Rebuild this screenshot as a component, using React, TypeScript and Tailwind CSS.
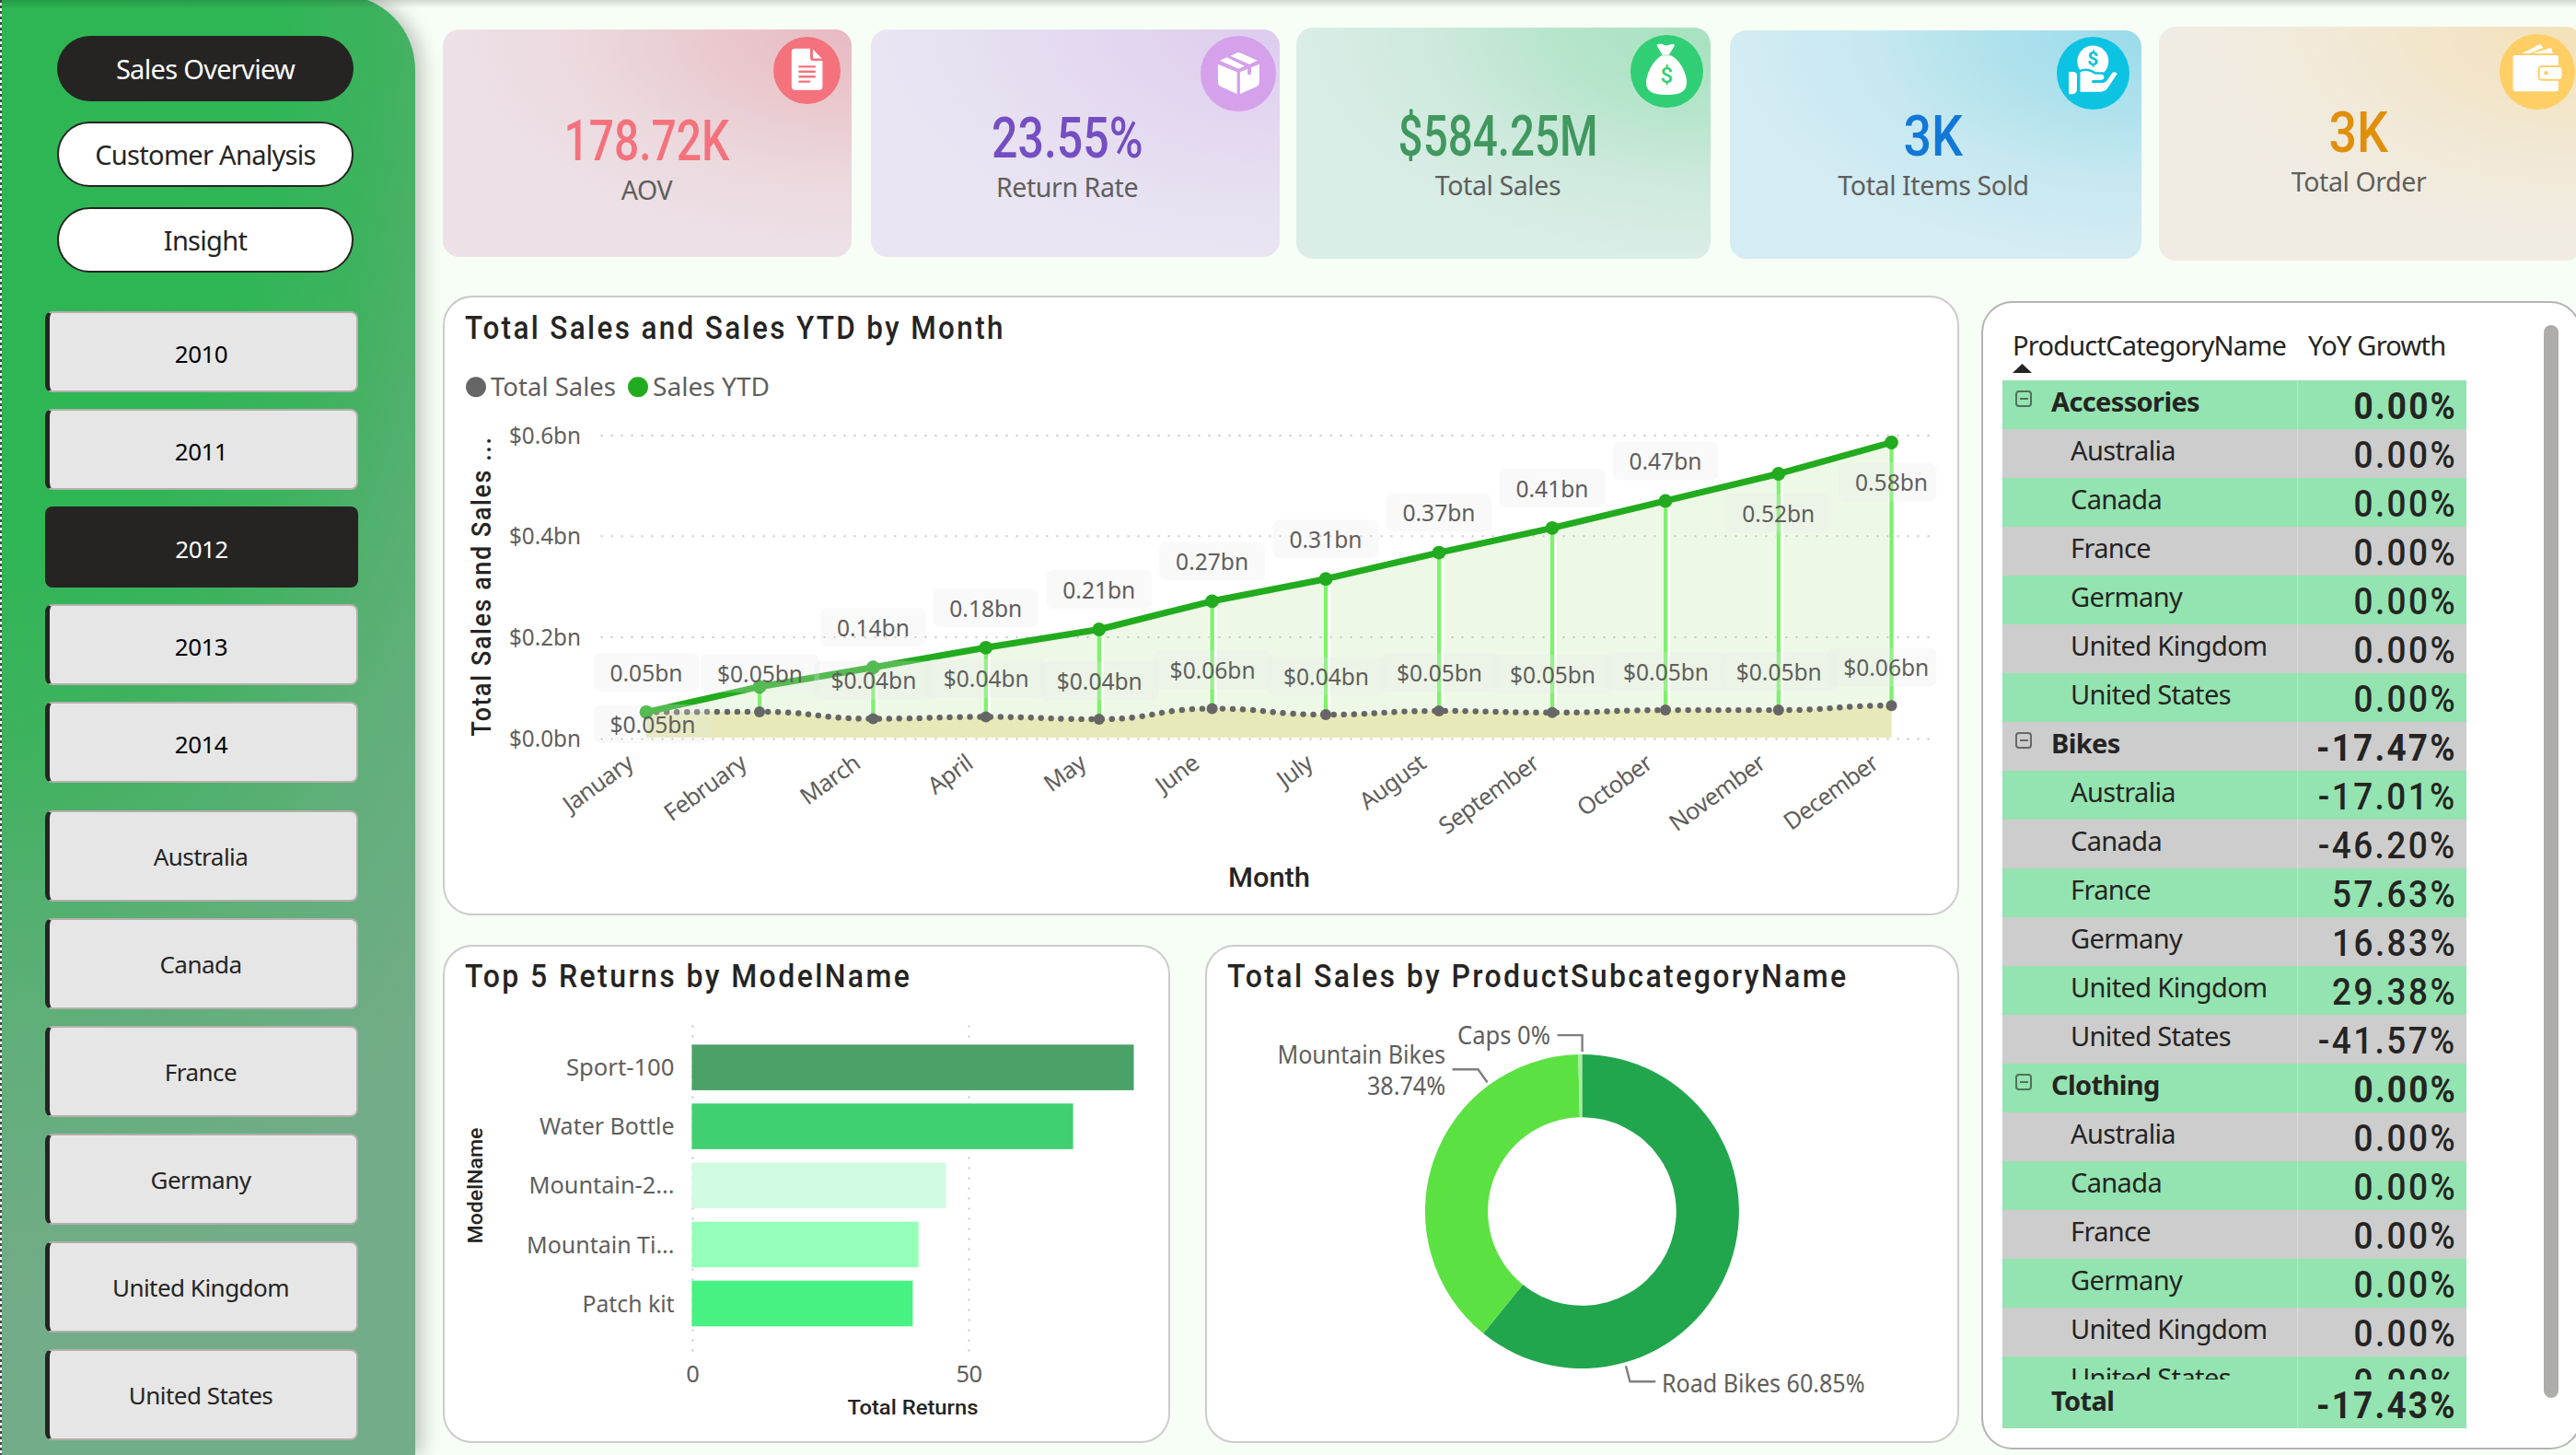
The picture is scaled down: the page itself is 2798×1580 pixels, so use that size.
import type { ReactNode } from "react";

type Kpi = {
  label: string;
  value: string;
  card: string;
  valueStyle: string;
  badge: string;
  icon: ReactNode;
};

const pages = ["Sales Overview", "Customer Analysis", "Insight"];
const years = ["2010", "2011", "2012", "2013", "2014"];
const countries = [
  "Australia",
  "Canada",
  "France",
  "Germany",
  "United Kingdom",
  "United States",
];

function FileIcon() {
  return (
    <svg viewBox="0 0 73 73" className="size-full">
      <path
        d="M23.5 12.7H40V23a3 3 0 0 0 3 3h10.4v28a3.7 3.7 0 0 1-3.7 3.7H23.5a3.7 3.7 0 0 1-3.7-3.7V16.4a3.7 3.7 0 0 1 3.7-3.7z"
        fill="#fff"
      />
      <path d="M43 13.6 52.6 23.4H43z" fill="#fff" />
      <path
        d="M28.4 32.4h16.4M28.4 37.8h16.4M28.4 43.2h16.4M28.4 48.6h10.8"
        stroke="#F3727C"
        strokeWidth="2.4"
        strokeLinecap="round"
      />
    </svg>
  );
}

function BoxIcon() {
  return (
    <svg viewBox="0 0 82 82" className="size-full" fill="#fff">
      <path d="M32.5 21.7 38.6 18.7Q41 17.4 44 18.7L61.8 26.7 53 30.7z" />
      <path d="M21 26.7 28.6 23.3 47.9 32.7 42.4 35.2Q41.2 35.7 40 35.2z" />
      <path d="M18.9 30.7 39.6 39.3V63L22 55Q18.9 53.4 18.9 50.3z" />
      <path d="M42.9 39.3 51 36V40.6a2 2 0 0 0 4 0V34.3L63.9 30.7V50.3Q63.9 53.4 61 55L42.9 63z" />
    </svg>
  );
}

function BagIcon() {
  return (
    <svg viewBox="0 0 79 79" className="size-full">
      <path
        d="M28.6 11.6Q28.6 9.4 31 9.8L34.3 9.7Q38.6 12.8 43.6 10.3 47.9 8.6 47.9 11.4L41.8 21.7H34.6z"
        fill="#fff"
      />
      <path
        d="M34 22.3H44C54 27 61 42 61 51 61 61 55 65 39.3 65 24 65 17 61 17 52 17 42 25 27 34 22.3z"
        fill="#fff"
      />
      <text
        x="39.3"
        y="51.6"
        textAnchor="middle"
        className="font-['Roboto',sans-serif] text-[24px] font-medium"
        fill="#31CF75"
      >
        $
      </text>
    </svg>
  );
}

function HandIcon() {
  return (
    <svg viewBox="0 0 79 79" className="size-full">
      <circle cx="39.3" cy="26.4" r="17" fill="#fff" />
      <g fill="#fff" stroke="#0DC3E2" strokeWidth="5" paintOrder="stroke">
        <path d="M25.5 59.7V38.3Q32.4 35.3 38.5 39L41.5 40.7H49.5Q52 42 51.3 45 50.5 46.7 47.6 47H39V50H49.5Q53 50 55 46.7L60.4 39Q63 37.3 65.8 40L55 56Q52.4 59.7 47.6 59.7z" />
      </g>
      <path
        d="M13 38H18.5Q22 38.5 22 42V58Q21 62 16.5 62.3H13z"
        fill="#fff"
      />
      <path
        d="M39.5 48.6H49.5"
        stroke="#0DC3E2"
        strokeWidth="3"
        strokeLinecap="round"
      />
      <text
        x="39.3"
        y="31.2"
        textAnchor="middle"
        className="font-['Roboto',sans-serif] text-[21px] font-bold"
        fill="#0DC3E2"
      >
        $
      </text>
    </svg>
  );
}

function WalletIcon() {
  return (
    <svg viewBox="0 0 82 82" className="size-full" fill="#fff">
      <path d="M24.4 21 42.8 11.4Q44.4 10.8 45.2 12.2L47.4 15 32.4 21z" />
      <path d="M36 21 54.6 15.2Q56 14.8 56.5 16.2L57.8 21z" />
      <rect x="14.5" y="23" width="49.5" height="39.2" rx="2.4" />
      <rect
        x="42.6"
        y="35"
        width="25.8"
        height="14.8"
        rx="3.6"
        stroke="#FFCE65"
        strokeWidth="2"
      />
      <circle cx="50.5" cy="42.3" r="2.2" fill="#FFCE65" />
    </svg>
  );
}

const kpis: Kpi[] = [
  {
    label: "AOV",
    value: "178.72K",
    card: "mt-[32px] w-[444px] h-[247px] pt-[91px] pr-[1px] bg-[radial-gradient(farthest-side_at_100%_0%,#E8B9C2_0%,#EACBD0_38%,#EBD9DE_66%,#EDE1E7_100%)]",
    valueStyle: "text-[#F3727C] scale-x-[0.785]",
    badge: "top-[8px] right-[12px] size-[73px] bg-[#F3727C]",
    icon: <FileIcon />,
  },
  {
    label: "Return Rate",
    value: "23.55%",
    card: "mt-[32px] ml-[21px] w-[444px] h-[247px] pt-[88px] pr-[18px] bg-[radial-gradient(farthest-side_at_100%_0%,#DDCCEE_0%,#E3D6F0_38%,#E6DEF0_66%,#E9E5F3_100%)]",
    valueStyle: "text-[#744EC2] scale-x-[0.82]",
    badge: "top-[7px] right-[4px] size-[82px] bg-[#D4A1EA]",
    icon: <BoxIcon />,
  },
  {
    label: "Total Sales",
    value: "$584.25M",
    card: "mt-[30px] ml-[18px] w-[450px] h-[251px] pt-[88px] pr-[12px] bg-[radial-gradient(farthest-side_at_100%_0%,#A6E1BE_0%,#B7E5CC_38%,#CDE9DC_66%,#DAEDE7_100%)]",
    valueStyle: "text-[#40985F] scale-x-[0.78]",
    badge: "top-[8px] right-[8px] size-[79px] bg-[#31CF75]",
    icon: <BagIcon />,
  },
  {
    label: "Total Items Sold",
    value: "3K",
    card: "mt-[33px] ml-[21px] w-[447px] h-[248px] pt-[85px] pr-[5px] bg-[radial-gradient(farthest-side_at_100%_0%,#9ADBEA_0%,#B0E2ED_38%,#C7E8F0_66%,#D4ECF3_100%)]",
    valueStyle: "text-[#1178D8] scale-x-[0.88]",
    badge: "top-[7px] right-[13px] size-[79px] bg-[#0DC3E2]",
    icon: <HandIcon />,
  },
  {
    label: "Total Order",
    value: "3K",
    card: "mt-[29px] ml-[19px] w-[460px] h-[254px] pt-[85px] pr-[26px] bg-[radial-gradient(farthest-side_at_100%_0%,#F3E1B8_0%,#F2E6CB_38%,#F1EADB_66%,#F0ECE4_100%)]",
    valueStyle: "text-[#E08F0B] scale-x-[0.88]",
    badge: "top-[8px] right-[8px] size-[82px] bg-[#FFCE65]",
    icon: <WalletIcon />,
  },
];

const months = [
  { name: "January", x: 702, ytd: 773.8, sales: 773.8, ytdLabel: "0.05bn", salesLabel: "$0.05bn" },
  { name: "February", x: 825, ytd: 746.2, sales: 773.4, ytdLabel: "", salesLabel: "$0.05bn" },
  { name: "March", x: 948.4, ytd: 725.2, sales: 781, ytdLabel: "0.14bn", salesLabel: "$0.04bn" },
  { name: "April", x: 1070.8, ytd: 703.8, sales: 779, ytdLabel: "0.18bn", salesLabel: "$0.04bn" },
  { name: "May", x: 1193.8, ytd: 684, sales: 781.5, ytdLabel: "0.21bn", salesLabel: "$0.04bn" },
  { name: "June", x: 1316.6, ytd: 653.3, sales: 770, ytdLabel: "0.27bn", salesLabel: "$0.06bn" },
  { name: "July", x: 1440, ytd: 629.2, sales: 776.5, ytdLabel: "0.31bn", salesLabel: "$0.04bn" },
  { name: "August", x: 1563, ytd: 600.6, sales: 772.5, ytdLabel: "0.37bn", salesLabel: "$0.05bn" },
  { name: "September", x: 1686, ytd: 573.8, sales: 774.3, ytdLabel: "0.41bn", salesLabel: "$0.05bn" },
  { name: "October", x: 1809, ytd: 544.4, sales: 771.6, ytdLabel: "0.47bn", salesLabel: "$0.05bn" },
  { name: "November", x: 1931.8, ytd: 515, sales: 771.6, ytdLabel: "0.52bn", salesLabel: "$0.05bn" },
  { name: "December", x: 2054.5, ytd: 481, sales: 766.7, ytdLabel: "0.58bn", salesLabel: "$0.06bn" },
];

const yTicks = [
  { label: "$0.6bn", y: 473.4 },
  { label: "$0.4bn", y: 582.8 },
  { label: "$0.2bn", y: 692.4 },
  { label: "$0.0bn", y: 803 },
];

const bars = [
  { name: "Sport-100", y: 1135.8, end: 1231.5, w: 115.6, fill: "#4BA269" },
  { name: "Water Bottle", y: 1199.8, end: 1165.6, w: 144.6, fill: "#41D071" },
  { name: "Mountain-2...", y: 1264, end: 1027.5, w: 156, fill: "#D0FBE0" },
  { name: "Mountain Ti...", y: 1328.2, end: 997.7, w: 158.5, fill: "#95FFB9" },
  { name: "Patch kit", y: 1392.2, end: 991.4, w: 98, fill: "#48F282" },
];

type Row = { name: string; value: string; parent?: boolean };

const rows: Row[] = [
  { name: "Accessories", value: "0.00%", parent: true },
  { name: "Australia", value: "0.00%" },
  { name: "Canada", value: "0.00%" },
  { name: "France", value: "0.00%" },
  { name: "Germany", value: "0.00%" },
  { name: "United Kingdom", value: "0.00%" },
  { name: "United States", value: "0.00%" },
  { name: "Bikes", value: "-17.47%", parent: true },
  { name: "Australia", value: "-17.01%" },
  { name: "Canada", value: "-46.20%" },
  { name: "France", value: "57.63%" },
  { name: "Germany", value: "16.83%" },
  { name: "United Kingdom", value: "29.38%" },
  { name: "United States", value: "-41.57%" },
  { name: "Clothing", value: "0.00%", parent: true },
  { name: "Australia", value: "0.00%" },
  { name: "Canada", value: "0.00%" },
  { name: "France", value: "0.00%" },
  { name: "Germany", value: "0.00%" },
  { name: "United Kingdom", value: "0.00%" },
  { name: "United States", value: "0.00%" },
];

function Sidebar() {
  return (
    <aside className="flex w-[449px] shrink-0 flex-col overflow-hidden rounded-tr-[80px] -mt-[5px] h-[1585px] pt-[44px] bg-[radial-gradient(720px_1420px_at_0%_0%,#2DB653_0%,#2FB655_42%,#3FB25F_58%,#50B06C_68%,#60AF79_79%,#6AAD81_90%,#72AC88_100%)] shadow-[8px_0_20px_rgba(0,0,0,0.22)]">
      <nav className="ml-[60px] flex w-[322px] flex-col gap-[22px] text-[29px] tracking-[-0.024em]">
        {pages.map((p, i) => (
          <button
            key={p}
            className={
              i === 0
                ? "h-[71px] rounded-[36px] bg-[#252423] pt-[1px] text-white"
                : "h-[71px] rounded-[36px] border-2 border-[#252423] bg-white pt-[1px] text-[#252423]"
            }
          >
            {p}
          </button>
        ))}
      </nav>

      <div className="ml-[47px] mt-[42px] flex w-[340px] flex-col gap-[18px] text-[26px] tracking-[-0.02em]">
        {years.map((y) => (
          <button
            key={y}
            className={
              y === "2012"
                ? "h-[88px] rounded-lg bg-[#252423] pt-[5px] text-white"
                : "h-[88px] rounded-lg border-2 border-l-[5px] border-[#B3B0AD] border-l-[#252423] bg-[#E6E6E6] pt-[5px] pr-[4px] text-black"
            }
          >
            {y}
          </button>
        ))}
      </div>

      <div className="ml-[47px] mt-[30px] flex w-[340px] flex-col gap-[18px] text-[26px] tracking-[-0.02em]">
        {countries.map((c) => (
          <button
            key={c}
            className="h-[99px] rounded-lg border-2 border-l-[5px] border-[#B3B0AD] border-l-[#252423] bg-[#E6E6E6] pt-[2px] pr-[5px] text-[#252423]"
          >
            {c}
          </button>
        ))}
      </div>
    </aside>
  );
}

function KpiCard({ kpi }: { kpi: Kpi }) {
  return (
    <div
      className={`relative flex shrink-0 flex-col items-center rounded-[18px] ${kpi.card}`}
    >
      <span
        className={`font-['Roboto',sans-serif] text-[61px] leading-[61px] font-medium ${kpi.valueStyle}`}
      >
        {kpi.value}
      </span>
      <span className="mt-[8px] text-[28.5px] leading-[28px] tracking-[-0.014em] text-[#605E5C]">
        {kpi.label}
      </span>
      <div className={`absolute overflow-hidden rounded-full ${kpi.badge}`}>
        {kpi.icon}
      </div>
    </div>
  );
}

function PanelTitle({
  stretch,
  children,
}: {
  stretch: string;
  children: ReactNode;
}) {
  return (
    <h2
      className={`ml-[22px] origin-left whitespace-nowrap font-['Roboto',sans-serif] text-[34.5px] leading-[40px] font-medium tracking-[0.075em] text-[#252423] ${stretch}`}
    >
      {children}
    </h2>
  );
}

function DataLabel({
  x,
  top,
  baseline,
  width,
  text,
}: {
  x: number;
  top: number;
  baseline: number;
  width: number;
  text: string;
}) {
  const left = x - width / 2 - 18;
  return (
    <g>
      <rect
        x={left}
        y={top}
        width={Math.min(width + 36, 2103.6 - left)}
        height="42"
        rx="8"
        fill="#E6E6E6"
        opacity="0.26"
      />
      <text
        x={x}
        y={baseline}
        textAnchor="middle"
        textLength={width}
        lengthAdjust="spacingAndGlyphs"
        className="text-[25.5px]"
        fill="#605E5C"
      >
        {text}
      </text>
    </g>
  );
}

function SalesChart() {
  const ytdLine = months.map((m) => `${m.x} ${m.ytd}`).join(" L");
  const salesLine = months
    .map((m, i) => {
      if (i === 0) return `${m.x} ${m.sales}`;
      const prev = months[i - 1];
      const mid = (m.x + prev.x) / 2;
      return `C${mid} ${prev.sales} ${mid} ${m.sales} ${m.x} ${m.sales}`;
    })
    .join(" ");
  const first = months[0];
  const last = months[months.length - 1];

  return (
    <svg viewBox="483 376.5 1643 615" className="block h-[615px] w-[1643px]">
      <circle cx="517" cy="420.7" r="11" fill="#666" />
      <text x="533" y="430.5" textLength="136" lengthAdjust="spacingAndGlyphs" className="text-[28px]" fill="#605E5C">
        Total Sales
      </text>
      <circle cx="693" cy="420.7" r="11" fill="#22AB1E" />
      <text x="709" y="430.5" textLength="127" lengthAdjust="spacingAndGlyphs" className="text-[28px]" fill="#605E5C">
        Sales YTD
      </text>

      {yTicks.map((t) => (
        <g key={t.label}>
          <line
            x1="652.5"
            x2="2104"
            y1={t.y}
            y2={t.y}
            stroke="#C8C6C4"
            strokeWidth="2"
            strokeDasharray="2 9"
          />
          <text x="553" y={t.y + 8.8} textLength="78" lengthAdjust="spacingAndGlyphs" className="text-[26px]" fill="#605E5C">
            {t.label}
          </text>
        </g>
      ))}
      <text
        transform="translate(533 800) rotate(-90)"
        textLength="326"
        lengthAdjust="spacingAndGlyphs"
        className="font-['Roboto',sans-serif] text-[29px] font-medium tracking-[0.06em]"
        fill="#252423"
      >
        Total Sales and Sales ...
      </text>

      <path
        d={`M${ytdLine} V801.5 H${first.x} Z`}
        fill="#A5DC82"
        opacity="0.2"
      />
      <path
        d={`M${salesLine} V801.5 H${first.x} Z`}
        fill="#E7EAB8"
      />
      {months.slice(1).map((m) => (
        <g key={m.name}>
          <line x1={m.x + 1} x2={m.x + 1} y1={m.ytd} y2={m.sales} stroke="#fff" strokeWidth="8" />
          <line x1={m.x} x2={m.x} y1={m.ytd} y2={m.sales} stroke="#7DF26B" strokeWidth="4.4" />
        </g>
      ))}
      <path
        d={`M${salesLine}`}
        fill="none"
        stroke="#666"
        strokeWidth="6.4"
        strokeLinecap="round"
        strokeDasharray="0.1 10.9"
      />
      {months.map((m) => (
        <circle key={m.name} cx={m.x} cy={m.sales} r="6" fill="#666" />
      ))}
      <path
        d={`M${ytdLine}`}
        fill="none"
        stroke="#22AB1E"
        strokeWidth="7"
        strokeLinejoin="round"
      />
      {months.map((m) => (
        <circle key={m.name} cx={m.x} cy={m.ytd} r="7.4" fill="#22AB1E" />
      ))}

      {months.map((m) => {
        // the last two running totals sit below the line
        const below = m === last || m.name === "November";
        const january = m === first;
        return (
          <g key={m.name}>
            {m.ytdLabel && (
              <DataLabel
                x={m.x}
                top={below ? m.ytd + 22 : m.ytd - 64.4}
                baseline={below ? m.ytd + 52.3 : m.ytd - 33.8}
                width={79}
                text={m.ytdLabel}
              />
            )}
            <DataLabel
              x={january ? 709 : m === last ? 2048.7 : m.x + 0.5}
              top={january ? 765.5 : m.sales - 62.8}
              baseline={january ? 796 : m.sales - 32.2}
              width={93}
              text={m.salesLabel}
            />
          </g>
        );
      })}

      {months.map((m) => (
        <text
          key={m.name}
          transform={`translate(${m.x - 12.5} 833) rotate(-36)`}
          textAnchor="end"
          className="text-[25.5px] tracking-[-0.024em]"
          fill="#605E5C"
        >
          {m.name}
        </text>
      ))}
      <text
        x="1334"
        y="963.5"
        textLength="89"
        lengthAdjust="spacingAndGlyphs"
        className="font-['Roboto',sans-serif] text-[29px] font-medium"
        fill="#252423"
      >
        Month
      </text>
    </svg>
  );
}

function ReturnsChart() {
  return (
    <svg viewBox="483 1081.5 785 484" className="block h-[484px] w-[785px]">
      {[752.4, 1052.6].map((x) => (
        <line
          key={x}
          x1={x}
          x2={x}
          y1="1115"
          y2="1471"
          stroke="#C8C6C4"
          strokeWidth="2"
          strokeDasharray="2 9"
        />
      ))}
      {bars.map((b) => (
        <g key={b.name}>
          <rect x="751.4" y={b.y} width={b.end - 751.4} height="49.6" fill={b.fill} />
          <text
            x="732.5"
            y={b.y + 33.8}
            textAnchor="end"
            textLength={b.w + 2}
            lengthAdjust="spacingAndGlyphs"
            className="text-[26px]"
            fill="#605E5C"
          >
            {b.name}
          </text>
        </g>
      ))}
      <text x="752.4" y="1502.5" textAnchor="middle" className="text-[25.5px] tracking-[-0.02em]" fill="#605E5C">
        0
      </text>
      <text x="1052.6" y="1502.5" textAnchor="middle" className="text-[25.5px] tracking-[-0.02em]" fill="#605E5C">
        50
      </text>
      <text
        x="920.5"
        y="1537"
        textLength="142"
        lengthAdjust="spacingAndGlyphs"
        className="font-['Roboto',sans-serif] text-[22.5px] font-medium"
        fill="#252423"
      >
        Total Returns
      </text>
      <text
        transform="translate(524 1352) rotate(-90)"
        textLength="126"
        lengthAdjust="spacingAndGlyphs"
        className="font-['Roboto',sans-serif] text-[22.5px] font-medium"
        fill="#252423"
      >
        ModelName
      </text>
    </svg>
  );
}

const donut = { cx: 1718.4, cy: 1317, outer: 170.5, inner: 102.3 };

function slicePath(from: number, to: number) {
  const at = (r: number, deg: number) => {
    const a = (deg * Math.PI) / 180;
    return `${donut.cx + r * Math.sin(a)} ${donut.cy - r * Math.cos(a)}`;
  };
  const large = to - from > 180 ? 1 : 0;
  return `M${at(donut.outer, from)} A${donut.outer} ${donut.outer} 0 ${large} 1 ${at(donut.outer, to)} L${at(donut.inner, to)} A${donut.inner} ${donut.inner} 0 ${large} 0 ${at(donut.inner, from)} Z`;
}

function SubcategoryDonut() {
  return (
    <svg viewBox="1311 1081.5 815 484" className="block h-[484px] w-[815px]">
      <path d={slicePath(0, 219)} fill="#21A64D" />
      <path d={slicePath(219, 358.6)} fill="#5CE142" />
      <path d={slicePath(358.6, 360)} fill="#A6EF9B" />
      <g fill="none" stroke="#7F7F7F" strokeWidth="2.4">
        <path d="M1691.6 1125.6H1718.6V1143.6" />
        <path d="M1577.5 1162.7H1605.4L1615.5 1176.8" />
        <path d="M1766 1484.7 1770.4 1501.8H1798.2" />
      </g>
      <g className="text-[26.5px]" fill="#605E5C">
        <text x="1583" y="1135.8" textLength="101" lengthAdjust="spacingAndGlyphs">
          Caps 0%
        </text>
        <text x="1387.5" y="1156" textLength="182.5" lengthAdjust="spacingAndGlyphs">
          Mountain Bikes
        </text>
        <text x="1485" y="1190.7" textLength="85" lengthAdjust="spacingAndGlyphs">
          38.74%
        </text>
        <text x="1805" y="1513" textLength="220.5" lengthAdjust="spacingAndGlyphs">
          Road Bikes 60.85%
        </text>
      </g>
    </svg>
  );
}

function GrowthValue({ value, bold }: { value: string; bold?: boolean }) {
  return (
    <div className="flex-1 pr-[10px] pt-[8px] text-right">
      <span
        className={`inline-block origin-right scale-x-[0.9] whitespace-nowrap font-['Roboto',sans-serif] text-[41px] leading-[40px] ${
          bold
            ? "font-bold tracking-[0.06em]"
            : "font-medium tracking-[0.066em]"
        }`}
      >
        {value}
      </span>
    </div>
  );
}

function TableRow({ row, striped }: { row: Row; striped: boolean }) {
  return (
    <div
      className={`flex h-[53.05px] shrink-0 text-[#252423] ${striped ? "bg-[#CDCDCD]" : "bg-[#93E4B0]"}`}
    >
      <div
        className={`flex w-[321px] border-r border-white/30 pt-[3px] text-[29px] leading-[40px] tracking-[-0.022em] ${row.parent ? "font-bold" : ""}`}
      >
        {row.parent ? (
          <>
            <span className="ml-[14px] mt-[8px] flex size-[18px] items-center justify-center rounded-[4px] border-2 border-[#252423]/60">
              <span className="h-[2px] w-[9px] bg-[#252423]/60" />
            </span>
            <span className="ml-[21px]">{row.name}</span>
          </>
        ) : (
          <span className="ml-[74px]">{row.name}</span>
        )}
      </div>
      <GrowthValue value={row.value} bold={row.parent} />
    </div>
  );
}

function GrowthTable() {
  return (
    <section className="ml-[24px] mt-[6px] flex h-[1247px] w-[652px] shrink-0 rounded-[34px] border-2 border-[#B3B3B3] bg-white pl-[21px]">
      <div className="w-[504px]">
        <div className="h-[83.5px] pt-[26px] text-[29px] leading-[40px] tracking-[-0.027em] text-[#252423]">
          <div className="flex">
            <span className="ml-[11px] w-[321px] whitespace-nowrap">
              ProductCategoryName
            </span>
            <span className="whitespace-nowrap">YoY Growth</span>
          </div>
          <svg viewBox="0 0 21 10" className="ml-[11px] block h-[10px] w-[21px]">
            <path d="M0 10 10.5 0 21 10z" fill="#252423" />
          </svg>
        </div>
        <div className="flex h-[1085.5px] flex-col overflow-hidden">
          {rows.map((r, i) => (
            <TableRow key={i} row={r} striped={i % 2 === 1} />
          ))}
        </div>
        <div className="flex h-[53px] bg-[#93E4B0] text-[#252423]">
          <div className="w-[321px] border-r border-white/30 pl-[53px] pt-[3px] text-[29px] leading-[40px] font-bold tracking-[-0.022em]">
            Total
          </div>
          <GrowthValue value="-17.43%" bold />
        </div>
      </div>
      <div className="ml-[84px] mt-[24px] h-[1165px] w-[16px] rounded-full bg-[#AEADAB]" />
    </section>
  );
}

export default function App() {
  return (
    <div className="relative flex h-[1580px] w-[2798px] overflow-hidden bg-[#F7FEF6] font-['Noto_Sans',sans-serif]">
      <div className="w-[2px] shrink-0 bg-[repeating-linear-gradient(180deg,#4a4a4a_0px,#4a4a4a_3px,#ffffff_3px,#ffffff_6px)]" />
      <Sidebar />

      <main className="flex shrink-0 flex-col pl-[30px]">
        <div className="flex h-[321px] items-start">
          {kpis.map((k) => (
            <KpiCard key={k.label} kpi={k} />
          ))}
        </div>

        <div className="flex">
          <div className="flex w-[1647px] flex-col">
            <section className="h-[673px] rounded-[32px] border-2 border-[#CCCCCC] bg-white pt-[13px]">
              <PanelTitle stretch="scale-x-[0.912]">
                Total Sales and Sales YTD by Month
              </PanelTitle>
              <SalesChart />
            </section>

            <div className="mt-[32px] flex justify-between">
              <section className="h-[541px] w-[790px] rounded-[32px] border-2 border-[#CCCCCC] bg-white pt-[12px]">
                <PanelTitle stretch="scale-x-[0.928]">
                  Top 5 Returns by ModelName
                </PanelTitle>
                <ReturnsChart />
              </section>
              <section className="h-[541px] w-[819px] rounded-[32px] border-2 border-[#CCCCCC] bg-white pt-[12px]">
                <PanelTitle stretch="scale-x-[0.928]">
                  Total Sales by ProductSubcategoryName
                </PanelTitle>
                <SubcategoryDonut />
              </section>
            </div>
          </div>

          <GrowthTable />
        </div>
      </main>

      {/* shadow cast by the toolbar above the canvas */}
      <div className="absolute inset-x-0 top-0 h-[9px] bg-gradient-to-b from-black/15 to-transparent" />
    </div>
  );
}
